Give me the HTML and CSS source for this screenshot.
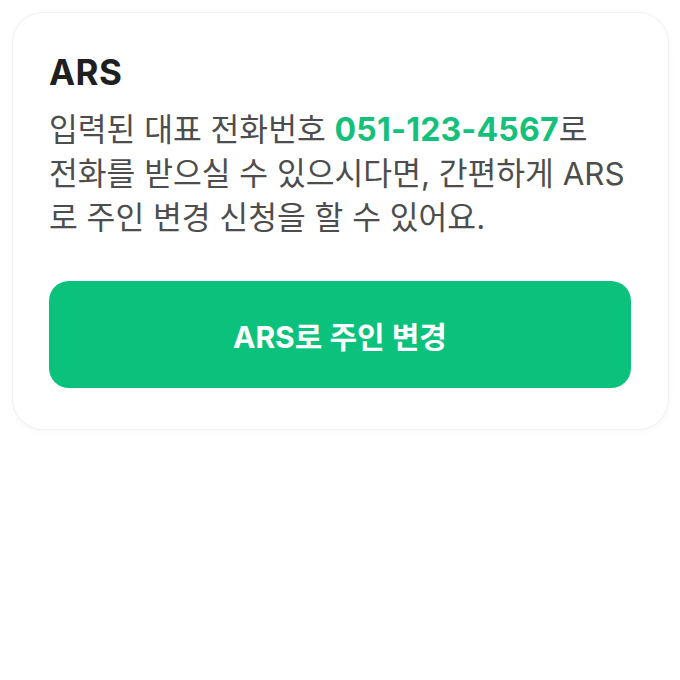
FILE: index.html
```html
<!DOCTYPE html>
<html lang="ko">
<head>
<meta charset="utf-8">
<link rel="stylesheet" href="styles.css">
</head>
<body>
<div class="card">
  <h2 class="title">ARS</h2>
  <p class="desc">입력된 대표 전화번호 <span class="phone">051-123-4567</span>로 전화를 받으실 수 있으시다면, 간편하게 ARS<wbr>로 주인 변경 신청을 할 수 있어요.</p>
  <button class="btn" type="button">ARS로 주인 변경</button>
</div>
</body>
</html>
```
FILE: styles.css
```css
html, body {
  margin: 0;
  background: #ffffff;
}
body {
  padding: 13px;
  font-family: "Inter", "Noto Sans CJK KR", sans-serif;
}
.card {
  width: 655px;
  box-sizing: border-box;
  padding: 37px 37px 41px 36px;
  border-radius: 30px;
  background: #fff;
  box-shadow: 0 0 0 1px #f1f1f1, 0 2px 8px rgba(0, 0, 0, 0.04);
  display: flex;
  flex-direction: column;
}
.title {
  margin: 0;
  font-size: 35px;
  line-height: 44px;
  font-weight: 700;
  letter-spacing: 0.4px;
  color: #1f1f1f;
}
.desc {
  margin: 14px 0 0;
  font-size: 31.3px;
  line-height: 44px;
  color: #4d4d4d;
  font-weight: 400;
  word-break: keep-all;
}
.phone {
  color: #14c07c;
  font-weight: 700;
  font-size: 32px;
  letter-spacing: 0.2px;
}
.btn {
  margin-top: 41px;
  height: 107px;
  border: 0;
  border-radius: 20px;
  background: #0bc27c;
  color: #fff;
  font-family: inherit;
  font-size: 30px;
  font-weight: 700;
  padding: 0;
}
```
